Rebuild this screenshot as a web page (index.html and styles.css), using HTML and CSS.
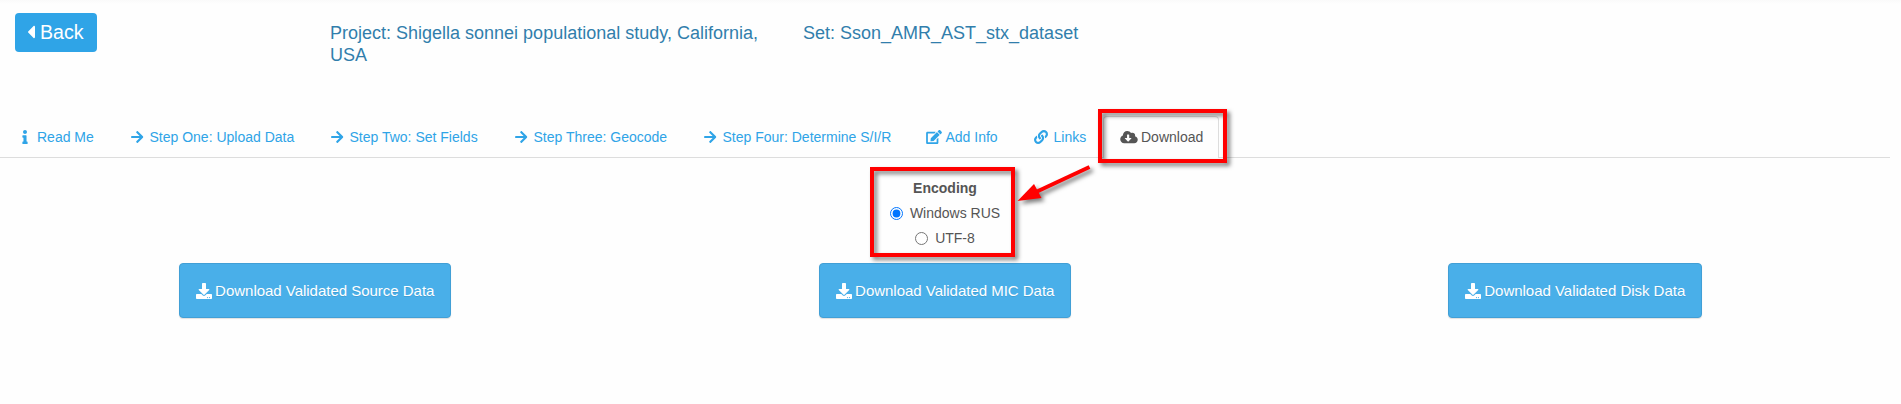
FILE: index.html
```html
<!DOCTYPE html>
<html lang="en">
<head>
<meta charset="utf-8">
<title>Download</title>
<link rel="stylesheet" href="styles.css">
</head>
<body>
<svg class="sprite" aria-hidden="true">
  <symbol id="caret" viewBox="0 0 192 512"><path d="M192 127.338v257.324c0 17.818-21.543 26.741-34.142 14.142L29.196 270.142c-7.81-7.81-7.81-20.474 0-28.284l128.662-128.662c12.599-12.6 34.142-3.676 34.142 14.142z"/></symbol>
  <symbol id="info" viewBox="0 0 192 512"><path d="M20 424.229h20V279.771H20c-11.046 0-20-8.954-20-20V212c0-11.046 8.954-20 20-20h112c11.046 0 20 8.954 20 20v212.229h20c11.046 0 20 8.954 20 20V492c0 11.046-8.954 20-20 20H20c-11.046 0-20-8.954-20-20v-47.771c0-11.046 8.954-20 20-20zM96 0C56.235 0 24 32.235 24 72s32.235 72 72 72 72-32.235 72-72S135.764 0 96 0z"/></symbol>
  <symbol id="arrow" viewBox="0 0 448 512"><path d="M190.5 66.9l22.2-22.2c9.4-9.4 24.6-9.4 33.9 0L441 239c9.4 9.4 9.4 24.6 0 33.9L246.6 467.3c-9.4 9.4-24.6 9.4-33.9 0l-22.2-22.2c-9.5-9.5-9.3-25 .4-34.3L311.4 296H24c-13.3 0-24-10.7-24-24v-32c0-13.3 10.7-24 24-24h287.4L190.9 101.2c-9.8-9.3-10-24.8-.4-34.3z"/></symbol>
  <symbol id="edit" viewBox="0 0 576 512"><path d="M402.6 83.2l90.2 90.2c3.8 3.8 3.8 10 0 13.8L274.4 405.6l-92.8 10.3c-12.4 1.4-22.9-9.1-21.5-21.5l10.3-92.8L388.8 83.2c3.8-3.8 10-3.8 13.8 0zm162-22.9l-48.8-48.8c-15.2-15.2-39.9-15.2-55.2 0l-35.4 35.4c-3.8 3.8-3.8 10 0 13.8l90.2 90.2c3.8 3.8 10 3.8 13.8 0l35.4-35.4c15.2-15.3 15.2-40 0-55.2zM384 346.2V448H64V128h229.8c3.2 0 6.2-1.3 8.5-3.5l40-40c7.6-7.6 2.2-20.5-8.5-20.5H48C21.5 64 0 85.5 0 112v352c0 26.5 21.5 48 48 48h352c26.5 0 48-21.5 48-48V306.2c0-10.7-12.9-16-20.5-8.5l-40 40c-2.2 2.3-3.5 5.3-3.5 8.5z"/></symbol>
  <symbol id="link" viewBox="0 0 512 512"><path d="M326.612 185.391c59.747 59.809 58.927 155.698.36 214.59-.11.12-.24.25-.36.37l-67.2 67.2c-59.27 59.27-155.699 59.262-214.96 0-59.27-59.26-59.27-155.7 0-214.96l37.106-37.106c9.84-9.84 26.786-3.3 27.294 10.606.648 17.722 3.826 35.527 9.69 52.721 1.986 5.822.567 12.262-3.783 16.612l-13.087 13.087c-28.026 28.026-28.905 73.66-1.155 101.96 28.024 28.579 74.086 28.749 102.325.51l67.2-67.19c28.191-28.191 28.073-73.757 0-101.83-3.701-3.694-7.429-6.564-10.341-8.569a16.037 16.037 0 0 1-6.947-12.606c-.396-10.567 3.348-21.456 11.698-29.806l21.054-21.055c5.521-5.521 14.182-6.199 20.584-1.731a152.482 152.482 0 0 1 20.522 17.197zM467.547 44.449c-59.261-59.262-155.69-59.27-214.96 0l-67.2 67.2c-.12.12-.25.25-.36.37-58.566 58.892-59.387 154.781.36 214.59a152.454 152.454 0 0 0 20.521 17.196c6.402 4.468 15.064 3.789 20.584-1.731l21.054-21.055c8.35-8.35 12.094-19.239 11.698-29.806a16.037 16.037 0 0 0-6.947-12.606c-2.912-2.005-6.64-4.875-10.341-8.569-28.073-28.073-28.191-73.639 0-101.83l67.2-67.19c28.239-28.239 74.3-28.069 102.325.51 27.75 28.3 26.872 73.934-1.155 101.96l-13.087 13.087c-4.35 4.35-5.769 10.79-3.783 16.612 5.864 17.194 9.042 34.999 9.69 52.721.509 13.906 17.454 20.446 27.294 10.606l37.106-37.106c59.271-59.259 59.271-155.699.001-214.959z"/></symbol>
  <symbol id="cloud" viewBox="0 0 640 512"><path d="M537.6 226.6c4.1-10.7 6.4-22.4 6.4-34.6 0-53-43-96-96-96-19.7 0-38.1 6-53.3 16.2C367 64.2 315.3 32 256 32c-88.4 0-160 71.6-160 160 0 2.7.1 5.4.2 8.1C40.2 219.8 0 273.2 0 336c0 79.5 64.5 144 144 144h368c70.7 0 128-57.3 128-128 0-61.9-44-113.6-102.4-125.4zm-132.9 88.7L299.3 420.7c-6.2 6.2-16.4 6.2-22.6 0L171.3 315.3c-10.1-10.1-2.9-27.3 11.3-27.3H248V176c0-8.8 7.2-16 16-16h48c8.8 0 16 7.2 16 16v112h65.4c14.2 0 21.4 17.2 11.3 27.3z"/></symbol>
  <symbol id="download" viewBox="0 0 512 512"><path d="M216 0h80c13.3 0 24 10.7 24 24v168h87.7c17.8 0 26.7 21.5 14.1 34.1L269.7 378.3c-7.5 7.5-19.8 7.5-27.3 0L90.1 226.1c-12.6-12.6-3.7-34.1 14.1-34.1H192V24c0-13.3 10.7-24 24-24zm296 376v112c0 13.3-10.7 24-24 24H24c-13.3 0-24-10.7-24-24V376c0-13.3 10.7-24 24-24h146.7l49 49c20.1 20.1 52.5 20.1 72.6 0l49-49H488c13.3 0 24 10.7 24 24zm-124 88c0-11-9-20-20-20s-20 9-20 20 9 20 20 20 20-9 20-20zm64 0c0-11-9-20-20-20s-20 9-20 20 9 20 20 20 20-9 20-20z"/></symbol>
</svg>

<header class="header">
  <div><a class="back"><svg class="back-icon"><use href="#caret"/></svg>Back</a></div>
  <h4 class="title">Project: Shigella sonnei populational study, California, USA</h4>
  <h4 class="title">Set: Sson_AMR_AST_stx_dataset</h4>
</header>

<nav class="tabs">
  <a class="tab"><svg class="icon icon-info"><use href="#info"/></svg>Read Me</a>
  <a class="tab"><svg class="icon icon-arrow"><use href="#arrow"/></svg>Step One: Upload Data</a>
  <a class="tab"><svg class="icon icon-arrow"><use href="#arrow"/></svg>Step Two: Set Fields</a>
  <a class="tab"><svg class="icon icon-arrow"><use href="#arrow"/></svg>Step Three: Geocode</a>
  <a class="tab"><svg class="icon icon-arrow"><use href="#arrow"/></svg>Step Four: Determine S/I/R</a>
  <a class="tab"><svg class="icon icon-edit"><use href="#edit"/></svg>Add Info</a>
  <a class="tab"><svg class="icon icon-link"><use href="#link"/></svg>Links</a>
  <a class="tab tab-active"><svg class="icon icon-cloud"><use href="#cloud"/></svg>Download</a>
</nav>

<main class="content">
  <div class="encoding">
    <strong class="encoding-title">Encoding</strong>
    <label class="option"><input class="radio" type="radio" name="encoding" checked>Windows RUS</label>
    <label class="option"><input class="radio" type="radio" name="encoding">UTF-8</label>
  </div>
  <div class="downloads">
    <a class="button"><svg class="button-icon"><use href="#download"/></svg>Download Validated Source Data</a>
    <a class="button"><svg class="button-icon"><use href="#download"/></svg>Download Validated MIC Data</a>
    <a class="button"><svg class="button-icon"><use href="#download"/></svg>Download Validated Disk Data</a>
  </div>
</main>

<svg class="annotations" viewBox="0 0 1901 404">
  <g class="annotation-stroke">
    <rect x="1100" y="111" width="125" height="50"/>
    <rect x="872" y="169" width="141" height="86"/>
    <path d="M1089.500 167L1036 192"/>
  </g>
  <path class="annotation-head" d="M1017.500 201L1034 184L1041.500 198Z"/>
</svg>
</body>
</html>
```
FILE: styles.css
```css
* { box-sizing: border-box; }

body {
  margin: 0;
  height: 404px;
  overflow: hidden;
  background: linear-gradient(#fafafa, #fefefe 4px);
  color: #555;
  font: 14px/20px "Liberation Sans", Arial, sans-serif;
}

svg { fill: currentColor; }

.sprite { display: none; }

.header {
  display: grid;
  grid-template-columns: 315px 473px 473px;
  height: 116px;
  padding-top: 13px;
}

.back {
  display: inline-flex;
  align-items: center;
  width: 82px;
  height: 39px;
  margin-left: 15px;
  padding: 0 0 2px 12px;
  border-radius: 4px;
  background: #2fa4e7;
  color: #fff;
  font-size: 19.6px;
}

.back-icon { width: 8px; height: 22px; margin-right: 5px; }

.title {
  margin: 9px 0 0;
  padding: 0 15px;
  color: #317eac;
  font-size: 18px;
  font-weight: 400;
  line-height: 22px;
}

.tabs {
  display: grid;
  grid-template-columns: 109px 200px 184px 189px 223px 108px 75px 116px;
  width: 1890px;
  height: 42px;
  padding-left: 15px;
  border-bottom: 1px solid #ddd;
}

.tab {
  display: flex;
  align-items: center;
  height: 42px;
  color: #2fa4e7;
  white-space: nowrap;
}

.icon { flex: none; height: 14px; }
.icon-info { width: 6px; margin: 0 9px 0 7px; }
.icon-arrow { width: 12.5px; margin: 0 6px 0 7px; }
.icon-edit { width: 16px; margin: 0 3.5px 0 6px; }
.icon-link { width: 14px; margin: 0 5.5px 0 6px; }
.icon-cloud { width: 18px; margin-right: 3px; }

.tab-active {
  padding: 0 0 1px 16px;
  border: 1px solid #ddd;
  border-bottom: 0;
  border-radius: 4px 4px 0 0;
  background: #fefefe;
  color: #555;
}

.content { width: 1890px; padding-top: 20px; }

.encoding {
  display: flex;
  flex-direction: column;
  align-items: center;
  gap: 5px;
}

.encoding-title { line-height: 20px; }

.option { display: flex; align-items: center; gap: 7px; }

.radio { width: 13px; height: 13px; margin: 0; }

.downloads {
  display: grid;
  grid-template-columns: repeat(3, 1fr);
  justify-items: center;
  padding-top: 15px;
}

.button {
  display: flex;
  align-items: center;
  height: 55px;
  padding: 0 16px;
  border: 1px solid #419fd6;
  border-radius: 4px;
  background: #49afe9;
  box-shadow: 0 1px 1px rgba(0, 0, 0, .12);
  color: #fff;
  font-size: 15px;
  letter-spacing: -.02px;
  text-shadow: 0 1px 0 rgba(0, 0, 0, .1);
}

.button-icon { width: 16px; height: 16px; margin-right: 3.5px; }

/* Callout frames and pointer lie over the page */
.annotations {
  position: absolute;
  top: 0;
  left: 0;
  width: 1901px;
  height: 404px;
  filter: drop-shadow(3px 3px 2px rgba(0, 0, 0, .5));
  pointer-events: none;
}

.annotation-stroke { fill: none; stroke: #f00; stroke-width: 4; }
.annotation-head { fill: #f00; }
```
